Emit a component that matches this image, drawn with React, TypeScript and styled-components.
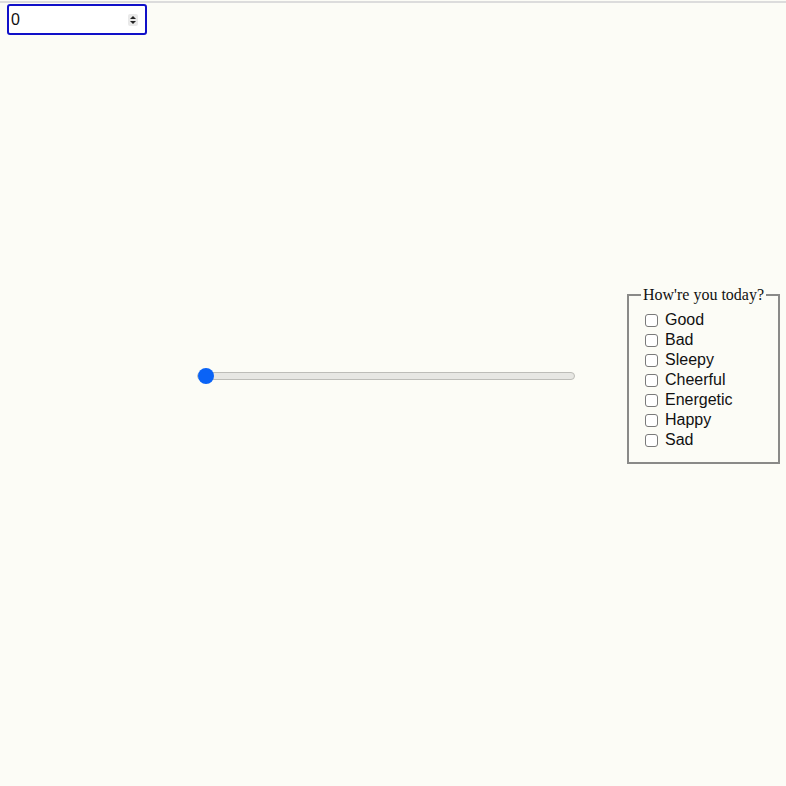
import React, { useState } from 'react';
import styled, { createGlobalStyle } from 'styled-components';

const GlobalStyle = createGlobalStyle`
  html, body {
    margin: 0;
    padding: 0;
    background: #fcfcf6;
  }
`;

const Page = styled.div`
  min-height: 786px;
  padding-top: 1px;
  box-sizing: border-box;
`;

const TopRule = styled.div`
  height: 2px;
  background: #dcdcdc;
`;

const InputRow = styled.div`
  padding: 1px 7px 0;
`;

const NumberBox = styled.div`
  display: flex;
  align-items: center;
  width: 140px;
  height: 31px;
  box-sizing: border-box;
  border: 2px solid #1010c8;
  border-radius: 3px;
  background: #ffffff;
  padding: 0 7px 0 2px;
`;

const NumberField = styled.input`
  flex: 1;
  min-width: 0;
  border: none;
  outline: none;
  background: transparent;
  font-family: 'Liberation Sans', Arial, sans-serif;
  font-size: 16px;
  color: #111;
  padding: 0;
`;

const Main = styled.main`
  display: flex;
  align-items: center;
  height: 682px;
  padding-left: 197px;
  gap: 50px;
`;

const Slider = styled.input`
  -webkit-appearance: none;
  appearance: none;
  width: 378px;
  height: 16px;
  margin: 0;
  background: transparent;

  &::-webkit-slider-runnable-track {
    height: 8px;
    border-radius: 4px;
    background: #e7e7e3;
    border: 1px solid #bdbdb8;
    box-sizing: border-box;
  }

  &::-webkit-slider-thumb {
    -webkit-appearance: none;
    width: 16px;
    height: 16px;
    margin-top: -5px;
    border-radius: 50%;
    background: #0a63f6;
    border: none;
  }
`;

const Moods = styled.fieldset`
  width: 153px;
  box-sizing: border-box;
  margin: 0 2px 2px;
  padding: 6px 8px 12px 12px;
  border: 2px solid #8a8a88;
`;

const Legend = styled.legend`
  font-family: 'Liberation Serif', 'Times New Roman', serif;
  font-size: 16px;
  color: #111;
  padding: 0 2px;
  white-space: nowrap;
`;

const MoodLabel = styled.label`
  display: flex;
  align-items: center;
  height: 20px;
  font-family: 'Liberation Sans', Arial, sans-serif;
  font-size: 16px;
  color: #111;
`;

const MoodCheck = styled.input`
  -webkit-appearance: none;
  appearance: none;
  width: 13px;
  height: 13px;
  box-sizing: border-box;
  margin: 0 7px 0 4px;
  border: 1px solid #7a7a7a;
  border-radius: 3px;
  background: #ffffff;

  &:checked {
    background: #0a63f6;
    border-color: #0a63f6;
  }
`;

function Spinner() {
  return (
    <svg width="10" height="12" viewBox="0 0 10 12">
      <rect x="0" y="0" width="10" height="12" rx="2" fill="#e9e9e9" />
      <path d="M5 2 L8 5 L2 5 Z" fill="#222" />
      <path d="M5 10 L8 7 L2 7 Z" fill="#222" />
    </svg>
  );
}

const moods = ['Good', 'Bad', 'Sleepy', 'Cheerful', 'Energetic', 'Happy', 'Sad'];

function App() {
  const [count, setCount] = useState('0');
  const [level, setLevel] = useState(0);
  const [checked, setChecked] = useState<string[]>([]);

  const toggle = (mood: string) => {
    setChecked(checked.includes(mood) ? checked.filter((m) => m !== mood) : [...checked, mood]);
  };

  return (
    <Page>
      <GlobalStyle />
      <TopRule />
      <InputRow>
        <NumberBox>
          <NumberField value={count} onChange={(e) => setCount(e.target.value)} />
          <Spinner />
        </NumberBox>
      </InputRow>
      <Main>
        <Slider
          type="range"
          min={0}
          max={100}
          value={level}
          onChange={(e) => setLevel(Number(e.target.value))}
        />
        <Moods>
          <Legend>How're you today?</Legend>
          {moods.map((mood) => (
            <MoodLabel key={mood}>
              <MoodCheck
                type="checkbox"
                checked={checked.includes(mood)}
                onChange={() => toggle(mood)}
              />
              {mood}
            </MoodLabel>
          ))}
        </Moods>
      </Main>
    </Page>
  );
}

export default App;
